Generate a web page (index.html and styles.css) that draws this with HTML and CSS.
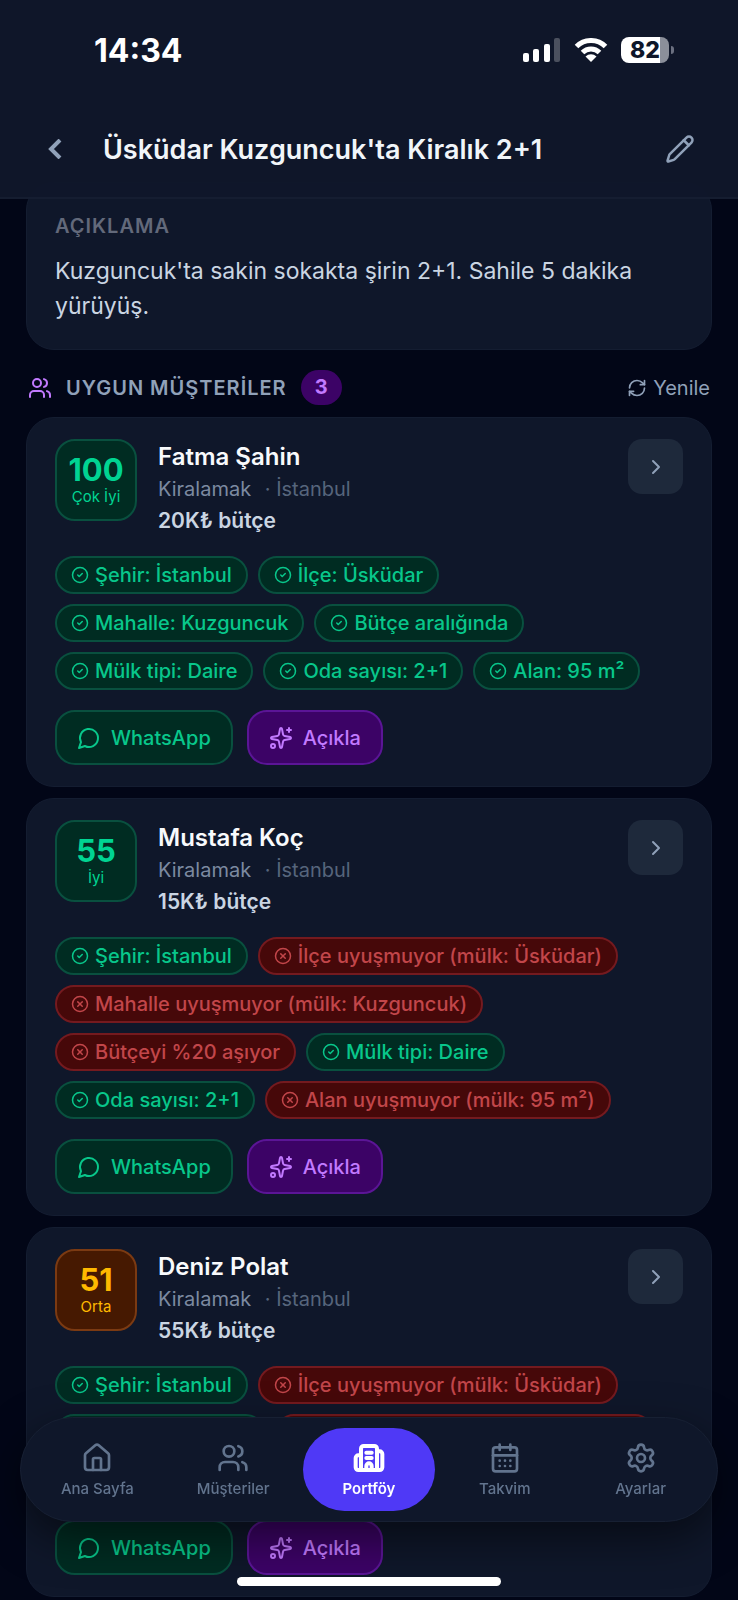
FILE: index.html
```html
<!DOCTYPE html>
<html lang="tr">
<head>
  <meta charset="UTF-8" />
  <meta name="viewport" content="width=device-width, initial-scale=1" />
  <title>Üsküdar Kuzguncuk'ta Kiralık 2+1</title>
  <link rel="stylesheet" href="styles.css">
</head>
<body>
  <svg class="sprite" aria-hidden="true">
    <symbol id="i-users" viewBox="0 0 24 24">
      <path d="M16 21v-2a4 4 0 0 0-4-4H6a4 4 0 0 0-4 4v2" />
      <circle cx="9" cy="7" r="4" />
      <path d="M22 21v-2a4 4 0 0 0-3-3.87" />
      <path d="M16 3.13a4 4 0 0 1 0 7.75" />
    </symbol>
    <symbol id="i-refresh" viewBox="0 0 24 24">
      <path d="M3 12a9 9 0 0 1 9-9 9.75 9.75 0 0 1 6.74 2.74L21 8" />
      <path d="M21 3v5h-5" />
      <path d="M21 12a9 9 0 0 1-9 9 9.75 9.75 0 0 1-6.74-2.74L3 16" />
      <path d="M8 16H3v5" />
    </symbol>
    <symbol id="i-check" viewBox="0 0 24 24">
      <circle cx="12" cy="12" r="10" />
      <path d="m9 12 2 2 4-4" />
    </symbol>
    <symbol id="i-cross" viewBox="0 0 24 24">
      <circle cx="12" cy="12" r="10" />
      <path d="m15 9-6 6" />
      <path d="m9 9 6 6" />
    </symbol>
    <symbol id="i-chat" viewBox="0 0 24 24">
      <path d="M7.9 20A9 9 0 1 0 4 16.1L2 22Z" />
    </symbol>
    <symbol id="i-sparkles" viewBox="0 0 24 24">
      <path d="M11.017 2.814a1 1 0 0 1 1.966 0l1.051 5.558a2 2 0 0 0 1.594 1.594l5.558 1.051a1 1 0 0 1 0 1.966l-5.558 1.051a2 2 0 0 0-1.594 1.594l-1.051 5.558a1 1 0 0 1-1.966 0l-1.051-5.558a2 2 0 0 0-1.594-1.594l-5.558-1.051a1 1 0 0 1 0-1.966l5.558-1.051a2 2 0 0 0 1.594-1.594z" />
      <path d="M20 2v4" />
      <path d="M22 4h-4" />
      <circle cx="4" cy="20" r="2" />
    </symbol>
    <symbol id="i-right" viewBox="0 0 24 24">
      <path d="m9 18 6-6-6-6" />
    </symbol>
    <symbol id="i-pencil" viewBox="0 0 24 24">
      <path d="M21.174 6.812a1 1 0 0 0-3.986-3.987L3.842 16.174a2 2 0 0 0-.5.83l-1.321 4.352a.5.5 0 0 0 .623.622l4.353-1.32a2 2 0 0 0 .83-.497z" />
      <path d="m15 5 4 4" />
    </symbol>
    <symbol id="i-home" viewBox="0 0 24 24">
      <path d="M15 21v-8a1 1 0 0 0-1-1h-4a1 1 0 0 0-1 1v8" />
      <path d="M3 10a2 2 0 0 1 .709-1.528l7-6a2 2 0 0 1 2.582 0l7 6A2 2 0 0 1 21 10v9a2 2 0 0 1-2 2H5a2 2 0 0 1-2-2z" />
    </symbol>
    <symbol id="i-building" viewBox="0 0 24 24">
      <path d="M10 12h4" />
      <path d="M10 8h4" />
      <path d="M14 21v-3a2 2 0 0 0-4 0v3" />
      <path d="M6 10H4a2 2 0 0 0-2 2v7a2 2 0 0 0 2 2h16a2 2 0 0 0 2-2V9a2 2 0 0 0-2-2h-2" />
      <path d="M6 21V5a2 2 0 0 1 2-2h8a2 2 0 0 1 2 2v16" />
    </symbol>
    <symbol id="i-calendar" viewBox="0 0 24 24">
      <path d="M8 2v4M16 2v4" />
      <rect x="3" y="4" width="18" height="18" rx="2" />
      <path d="M3 10h18" />
      <path d="M8 14h.01M12 14h.01M16 14h.01M8 18h.01M12 18h.01M16 18h.01" />
    </symbol>
    <symbol id="i-settings" viewBox="0 0 24 24">
      <path d="M9.671 4.136a2.34 2.34 0 0 1 4.659 0 2.34 2.34 0 0 0 3.319 1.915 2.34 2.34 0 0 1 2.33 4.033 2.34 2.34 0 0 0 0 3.831 2.34 2.34 0 0 1-2.33 4.033 2.34 2.34 0 0 0-3.319 1.915 2.34 2.34 0 0 1-4.659 0 2.34 2.34 0 0 0-3.32-1.915 2.34 2.34 0 0 1-2.33-4.033 2.34 2.34 0 0 0 0-3.831A2.34 2.34 0 0 1 6.35 6.051a2.34 2.34 0 0 0 3.319-1.915" />
      <circle cx="12" cy="12" r="3" />
    </symbol>
  </svg>

  <header class="header">
    <div class="status">
      <span class="time">14:34</span>
      <div class="status-icons">
        <svg class="signal" viewBox="0 0 38 24">
          <rect x="0" y="15" width="6" height="9" rx="2" />
          <rect x="10" y="11" width="6" height="13" rx="2" />
          <rect x="21" y="6" width="6" height="18" rx="2" />
          <rect class="off" x="31" y="0" width="6" height="24" rx="2" />
        </svg>
        <svg class="wifi" viewBox="0 0 34 24">
          <path class="arc" d="M2.500 8.500a20.500 20.500 0 0 1 29 0" />
          <path class="arc" d="M8.500 14.500a12 12 0 0 1 17 0" />
          <path d="M17 24l-5.500-5.500a8 8 0 0 1 11 0z" />
        </svg>
        <div class="battery"><span>82</span></div>
      </div>
    </div>
    <div class="topbar">
      <button class="icon-btn" aria-label="Geri">
        <svg class="back" viewBox="0 0 14 20"><path d="M12 1 3 10l9 9" /></svg>
      </button>
      <h1>Üsküdar Kuzguncuk'ta Kiralık 2+1</h1>
      <button class="icon-btn" aria-label="Düzenle">
        <svg class="icon edit"><use href="#i-pencil" /></svg>
      </button>
    </div>
  </header>

  <main class="content">
    <section class="card about">
      <h2>Açıklama</h2>
      <p>Kuzguncuk'ta sakin sokakta şirin 2+1. Sahile 5 dakika yürüyüş.</p>
    </section>

    <div class="section-head">
      <svg class="icon"><use href="#i-users" /></svg>
      <h2>Uygun Müşteriler</h2>
      <span class="count">3</span>
      <button class="refresh"><svg class="icon"><use href="#i-refresh" /></svg>Yenile</button>
    </div>

    <div class="matches">
      <article class="card">
        <div class="customer">
          <div class="score"><strong>100</strong><span>Çok İyi</span></div>
          <div class="info">
            <h3>Fatma Şahin</h3>
            <p>Kiralamak <span>· İstanbul</span></p>
            <p class="budget">20K₺ bütçe</p>
          </div>
          <button class="open" aria-label="Fatma Şahin"><svg class="icon"><use href="#i-right" /></svg></button>
        </div>
        <ul class="tags">
          <li><svg class="icon"><use href="#i-check" /></svg>Şehir: İstanbul</li>
          <li><svg class="icon"><use href="#i-check" /></svg>İlçe: Üsküdar</li>
          <li><svg class="icon"><use href="#i-check" /></svg>Mahalle: Kuzguncuk</li>
          <li><svg class="icon"><use href="#i-check" /></svg>Bütçe aralığında</li>
          <li><svg class="icon"><use href="#i-check" /></svg>Mülk tipi: Daire</li>
          <li><svg class="icon"><use href="#i-check" /></svg>Oda sayısı: 2+1</li>
          <li><svg class="icon"><use href="#i-check" /></svg>Alan: 95 m²</li>
        </ul>
        <div class="actions">
          <button><svg class="icon"><use href="#i-chat" /></svg>WhatsApp</button>
          <button class="explain"><svg class="icon"><use href="#i-sparkles" /></svg>Açıkla</button>
        </div>
      </article>

      <article class="card">
        <div class="customer">
          <div class="score"><strong>55</strong><span>İyi</span></div>
          <div class="info">
            <h3>Mustafa Koç</h3>
            <p>Kiralamak <span>· İstanbul</span></p>
            <p class="budget">15K₺ bütçe</p>
          </div>
          <button class="open" aria-label="Mustafa Koç"><svg class="icon"><use href="#i-right" /></svg></button>
        </div>
        <ul class="tags">
          <li><svg class="icon"><use href="#i-check" /></svg>Şehir: İstanbul</li>
          <li class="bad"><svg class="icon"><use href="#i-cross" /></svg>İlçe uyuşmuyor (mülk: Üsküdar)</li>
          <li class="bad"><svg class="icon"><use href="#i-cross" /></svg>Mahalle uyuşmuyor (mülk: Kuzguncuk)</li>
          <li class="bad"><svg class="icon"><use href="#i-cross" /></svg>Bütçeyi %20 aşıyor</li>
          <li><svg class="icon"><use href="#i-check" /></svg>Mülk tipi: Daire</li>
          <li><svg class="icon"><use href="#i-check" /></svg>Oda sayısı: 2+1</li>
          <li class="bad"><svg class="icon"><use href="#i-cross" /></svg>Alan uyuşmuyor (mülk: 95 m²)</li>
        </ul>
        <div class="actions">
          <button><svg class="icon"><use href="#i-chat" /></svg>WhatsApp</button>
          <button class="explain"><svg class="icon"><use href="#i-sparkles" /></svg>Açıkla</button>
        </div>
      </article>

      <article class="card">
        <div class="customer">
          <div class="score medium"><strong>51</strong><span>Orta</span></div>
          <div class="info">
            <h3>Deniz Polat</h3>
            <p>Kiralamak <span>· İstanbul</span></p>
            <p class="budget">55K₺ bütçe</p>
          </div>
          <button class="open" aria-label="Deniz Polat"><svg class="icon"><use href="#i-right" /></svg></button>
        </div>
        <ul class="tags">
          <li><svg class="icon"><use href="#i-check" /></svg>Şehir: İstanbul</li>
          <li class="bad"><svg class="icon"><use href="#i-cross" /></svg>İlçe uyuşmuyor (mülk: Üsküdar)</li>
          <li><svg class="icon"><use href="#i-check" /></svg>Bütçe aralığında</li>
          <li class="bad"><svg class="icon"><use href="#i-cross" /></svg>Oda sayısı uyuşmuyor (mülk: 2+1)</li>
          <li><svg class="icon"><use href="#i-check" /></svg>Mülk tipi: Daire</li>
        </ul>
        <div class="actions">
          <button><svg class="icon"><use href="#i-chat" /></svg>WhatsApp</button>
          <button class="explain"><svg class="icon"><use href="#i-sparkles" /></svg>Açıkla</button>
        </div>
      </article>
    </div>
  </main>

  <nav class="tabbar">
    <a href="#"><svg class="icon"><use href="#i-home" /></svg>Ana Sayfa</a>
    <a href="#"><svg class="icon"><use href="#i-users" /></svg>Müşteriler</a>
    <a href="#" class="active"><svg class="icon"><use href="#i-building" /></svg>Portföy</a>
    <a href="#"><svg class="icon"><use href="#i-calendar" /></svg>Takvim</a>
    <a href="#"><svg class="icon"><use href="#i-settings" /></svg>Ayarlar</a>
  </nav>
  <div class="home-bar"></div>
</body>
</html>
```
FILE: styles.css
```css
* {
  box-sizing: border-box;
}

html {
  scrollbar-width: none;
}

body {
  margin: 0;
  min-height: 100vh;
  font-family: Inter, "Liberation Sans", sans-serif;
  font-size: 20px;
  background: #020617;
  color: #cad5e2;
}

h1, h2, h3, p, ul {
  margin: 0;
  padding: 0;
}

button {
  font: inherit;
  color: inherit;
  background: none;
  border: none;
  padding: 0;
  cursor: pointer;
}

.sprite {
  display: none;
}

.icon {
  width: 24px;
  height: 24px;
  flex-shrink: 0;
  fill: none;
  stroke: currentColor;
  stroke-width: 2;
  stroke-linecap: round;
  stroke-linejoin: round;
}

/* header */
.header {
  position: sticky;
  top: 0;
  z-index: 5;
  height: 199px;
  background: rgba(15, 23, 42, 0.97);
  border-bottom: 2px solid rgba(30, 41, 59, 0.4);
}

.status {
  display: flex;
  justify-content: space-between;
  align-items: center;
  height: 100px;
  padding: 0 64px 0 94px;
  color: #fff;
}

.time {
  font-size: 32px;
  font-weight: 700;
}

.status-icons {
  display: flex;
  align-items: center;
  gap: 13px;
}

.signal {
  width: 38px;
  height: 24px;
  fill: #fff;
}

.signal .off {
  opacity: 0.25;
}

.wifi {
  width: 34px;
  height: 24px;
  fill: #fff;
}

.wifi .arc {
  fill: none;
  stroke: #fff;
  stroke-width: 5;
}

.battery {
  position: relative;
  width: 48px;
  height: 26px;
  margin-right: 5px;
  border-radius: 8px;
  background: linear-gradient(90deg, #fff 82%, #8b8f9a 82%);
  color: #0f172a;
  font-size: 23px;
  font-weight: 800;
  line-height: 26px;
  text-align: center;
}

.battery::after {
  content: "";
  position: absolute;
  right: -5px;
  top: 9px;
  width: 3px;
  height: 8px;
  border-radius: 0 4px 4px 0;
  background: #6b7080;
}

.topbar {
  display: flex;
  align-items: center;
  gap: 21px;
  height: 98px;
  padding: 0 31px 0 27px;
}

.icon-btn {
  display: flex;
  align-items: center;
  justify-content: center;
  width: 55px;
  height: 55px;
  color: #90a1b9;
}

.icon-btn .back {
  width: 14px;
  height: 20px;
  fill: none;
  stroke: currentColor;
  stroke-width: 4;
}

.icon-btn .edit {
  width: 30px;
  height: 30px;
}

.topbar h1 {
  flex: 1;
  font-size: 27px;
  font-weight: 600;
  color: #f1f5f9;
}

/* content */
.content {
  padding: 0 26px;
  margin-top: -17px;
}

.card {
  padding: 21px 28px;
  border: 1px solid #141d31;
  border-radius: 28px;
  background: #0f172a;
}

.about {
  padding: 29px 28px 25px;
}

.about h2 {
  font-size: 20px;
  font-weight: 600;
  line-height: 29px;
  letter-spacing: 1px;
  text-transform: uppercase;
  color: #62697a;
}

.about p {
  margin-top: 13px;
  font-size: 23px;
  line-height: 35px;
}

.section-head {
  display: flex;
  align-items: center;
  height: 35px;
  margin: 20px 2px 12px;
  color: #c27aff;
}

.section-head h2 {
  margin: 0 14px;
  font-size: 20px;
  font-weight: 600;
  letter-spacing: 1px;
  text-transform: uppercase;
  color: #90a1b9;
}

.count {
  padding: 0 14px;
  border-radius: 18px;
  background: #3c0366;
  font-weight: 700;
  line-height: 35px;
}

.refresh {
  display: flex;
  align-items: center;
  gap: 6px;
  margin-left: auto;
  color: #90a1b9;
}

.refresh .icon {
  width: 20px;
  height: 20px;
}

.matches {
  display: flex;
  flex-direction: column;
  gap: 11px;
}

.customer {
  display: flex;
  align-items: flex-start;
  gap: 21px;
}

.score {
  display: flex;
  flex-direction: column;
  align-items: center;
  justify-content: center;
  width: 82px;
  height: 82px;
  border: 2px solid #09503f;
  border-radius: 20px;
  background: #002c22;
  color: #00d492;
  font-size: 15px;
  line-height: 22px;
}

.score strong {
  font-size: 31px;
  line-height: 33px;
}

.score.medium {
  border-color: #7b3a12;
  background: #461901;
  color: #ffb900;
}

.info {
  flex: 1;
}

.info h3 {
  font-size: 24px;
  font-weight: 600;
  line-height: 35px;
  color: #f8fafc;
}

.info p {
  line-height: 31px;
  color: #7c8aa1;
}

.info span {
  margin-left: 8px;
  color: #56657c;
}

.info .budget {
  font-size: 21px;
  font-weight: 600;
  color: #cad5e2;
}

.open {
  display: flex;
  align-items: center;
  justify-content: center;
  width: 55px;
  height: 55px;
  border-radius: 14px;
  background: #1e293b;
  color: #90a1b9;
}

.tags {
  display: flex;
  flex-wrap: wrap;
  gap: 10px;
  margin: 20px 0;
  list-style: none;
}

.tags li {
  display: flex;
  align-items: center;
  gap: 6px;
  height: 38px;
  padding: 0 14px;
  border: 2px solid #09503f;
  border-radius: 19px;
  background: #002c22;
  color: #08c78b;
  font-weight: 500;
}

.tags .icon {
  width: 18px;
  height: 18px;
}

.tags .bad {
  border-color: #741a1f;
  background: #460809;
  color: #c2464a;
}

.actions {
  display: flex;
  gap: 14px;
}

.actions button {
  display: flex;
  align-items: center;
  gap: 10px;
  height: 55px;
  padding: 0 20px;
  border: 2px solid #09503f;
  border-radius: 20px;
  background: #002c22;
  color: #08c78b;
  font-weight: 500;
}

.actions .explain {
  border-color: #5b1596;
  background: #3c0366;
  color: #c27aff;
}

/* bottom navigation */
.tabbar {
  position: fixed;
  left: 20px;
  right: 20px;
  bottom: 78px;
  z-index: 5;
  display: flex;
  gap: 3px;
  padding: 10px;
  border: 1px solid #172033;
  border-radius: 53px;
  background: #0f172a;
  box-shadow: 0 16px 44px rgba(0, 0, 0, 0.5);
}

.tabbar a {
  flex: 1;
  display: flex;
  flex-direction: column;
  align-items: center;
  justify-content: center;
  gap: 4px;
  height: 83px;
  padding-top: 2px;
  border-radius: 42px;
  color: #62748e;
  font-size: 15px;
  font-weight: 500;
  line-height: 22px;
  text-decoration: none;
}

.tabbar .icon {
  width: 32px;
  height: 32px;
}

.tabbar .active {
  background: #4f39f6;
  color: #fff;
  font-weight: 600;
}

.tabbar .active .icon {
  stroke-width: 3;
}

.home-bar {
  position: fixed;
  left: 50%;
  bottom: 14px;
  z-index: 6;
  width: 264px;
  height: 9px;
  margin-left: -132px;
  border-radius: 5px;
  background: #fff;
}
```
